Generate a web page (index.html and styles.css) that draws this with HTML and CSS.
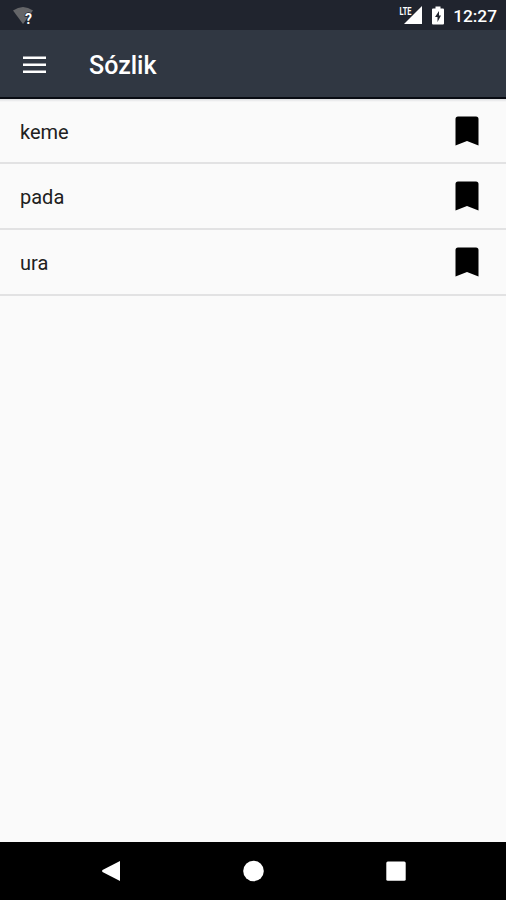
FILE: index.html
```html
<!DOCTYPE html>
<html lang="kaa">
<head>
<meta charset="utf-8">
<title>Sózlik</title>
<link rel="stylesheet" href="styles.css">
</head>
<body>
<div class="screen">
  <div class="status">
    <svg class="wifi" width="22" height="20" viewBox="0 0 22 20"><path d="M0 4.5Q10 -2.5 20 4.5L10 18Z" fill="#646568"/><text class="unknown" x="12" y="17.500">?</text></svg>
    <div class="indicators">
      <svg class="signal" width="24" height="20" viewBox="0 0 24 20"><path d="M23 1V19H5Z" fill="#fff"/><text class="lte" x="0.5" y="9.500" textLength="12" lengthAdjust="spacingAndGlyphs">LTE</text></svg>
      <svg class="battery" width="12" height="19" viewBox="0 0 12 19"><path d="M3.5 0.5h5v2H11a1 1 0 0 1 1 1V17.500a1 1 0 0 1-1 1H1a1 1 0 0 1-1-1V3.500a1 1 0 0 1 1-1h2.500Z" fill="#fff"/><path d="M7 5L3 11h2.500v5L9 9.500H7Z" fill="#20242e"/></svg>
      <span class="clock">12:27</span>
    </div>
  </div>
  <header class="toolbar">
    <svg class="menu" width="23" height="18" viewBox="0 0 23 18"><path d="M0 0.500h23v2.500H0ZM0 7.500h23V10H0ZM0 14.500h23V17H0Z" fill="#fff"/></svg>
    <h1 class="title">Sózlik</h1>
  </header>
  <main class="list">
    <div class="row"><span class="word">keme</span><svg class="bookmark" width="24" height="30" viewBox="0 0 24 30"><path d="M3 0.500H21Q23.500 0.500 23.500 3V29.500L12 25L0.500 29.500V3Q0.500 0.500 3 0.500Z"/></svg></div>
    <div class="row"><span class="word">pada</span><svg class="bookmark" width="24" height="30" viewBox="0 0 24 30"><path d="M3 0.500H21Q23.500 0.500 23.500 3V29.500L12 25L0.500 29.500V3Q0.500 0.500 3 0.500Z"/></svg></div>
    <div class="row"><span class="word">ura</span><svg class="bookmark" width="24" height="30" viewBox="0 0 24 30"><path d="M3 0.500H21Q23.500 0.500 23.500 3V29.500L12 25L0.500 29.500V3Q0.500 0.500 3 0.500Z"/></svg></div>
  </main>
  <nav class="navbar">
    <svg width="22" height="22" viewBox="0 0 22 22"><path d="M19 1V21L1.500 12Q0.500 11 1.500 10Z" fill="#fff"/></svg>
    <svg width="22" height="22" viewBox="0 0 22 22"><circle cx="10.500" cy="11" r="10.300" fill="#fff"/></svg>
    <svg width="22" height="22" viewBox="0 0 22 22"><rect x="1.300" y="1.500" width="19.400" height="19.300" rx="1.500" fill="#fff"/></svg>
  </nav>
</div>
</body>
</html>
```

FILE: styles.css
```css
* { box-sizing: border-box; }
body { margin: 0; font-family: Roboto, sans-serif; background: #fafafa; }
.screen { width: 506px; height: 900px; display: flex; flex-direction: column; background: #fafafa; }
.status { height: 30px; flex: none; display: flex; justify-content: space-between; align-items: center; padding: 2px 9px 0 13px; background: #20242e; color: #fff; }
.unknown { font-size: 14px; font-weight: 700; fill: #fff; stroke: #20242e; stroke-width: 1.5px; paint-order: stroke; }
.lte { font-size: 10px; font-weight: 700; fill: #fff; stroke: #20242e; stroke-width: 1.5px; paint-order: stroke; }
.indicators { display: flex; align-items: center; }
.signal { margin-right: 9px; margin-bottom: 2px; }
.battery { margin-right: 9px; margin-bottom: 2px; }
.clock { font-size: 17.3px; line-height: 22px; font-weight: 500; }
.toolbar { height: 69px; flex: none; display: flex; align-items: center; padding: 2px 23px 0; background: #303742; border-bottom: 2px solid #080b12; }
.menu { margin-right: 43px; }
.title { margin: 3px 0 0; font-size: 25px; line-height: 30px; font-weight: 500; color: #fff; }
.list { flex: 1; background: linear-gradient(#dcdde0, #fafafa 3px); }
.row { height: 66px; display: flex; align-items: center; justify-content: space-between; padding: 0 27px 0 20px; border-bottom: 2px solid #e2e2e3; }
.row:first-child { height: 65px; }
.word { padding-top: 2px; font-size: 20px; line-height: 24px; color: #202020; }
.bookmark { fill: #000; }
.navbar { height: 58px; flex: none; display: flex; justify-content: space-between; align-items: center; padding: 0 99px 0 101px; background: #000; }
```
